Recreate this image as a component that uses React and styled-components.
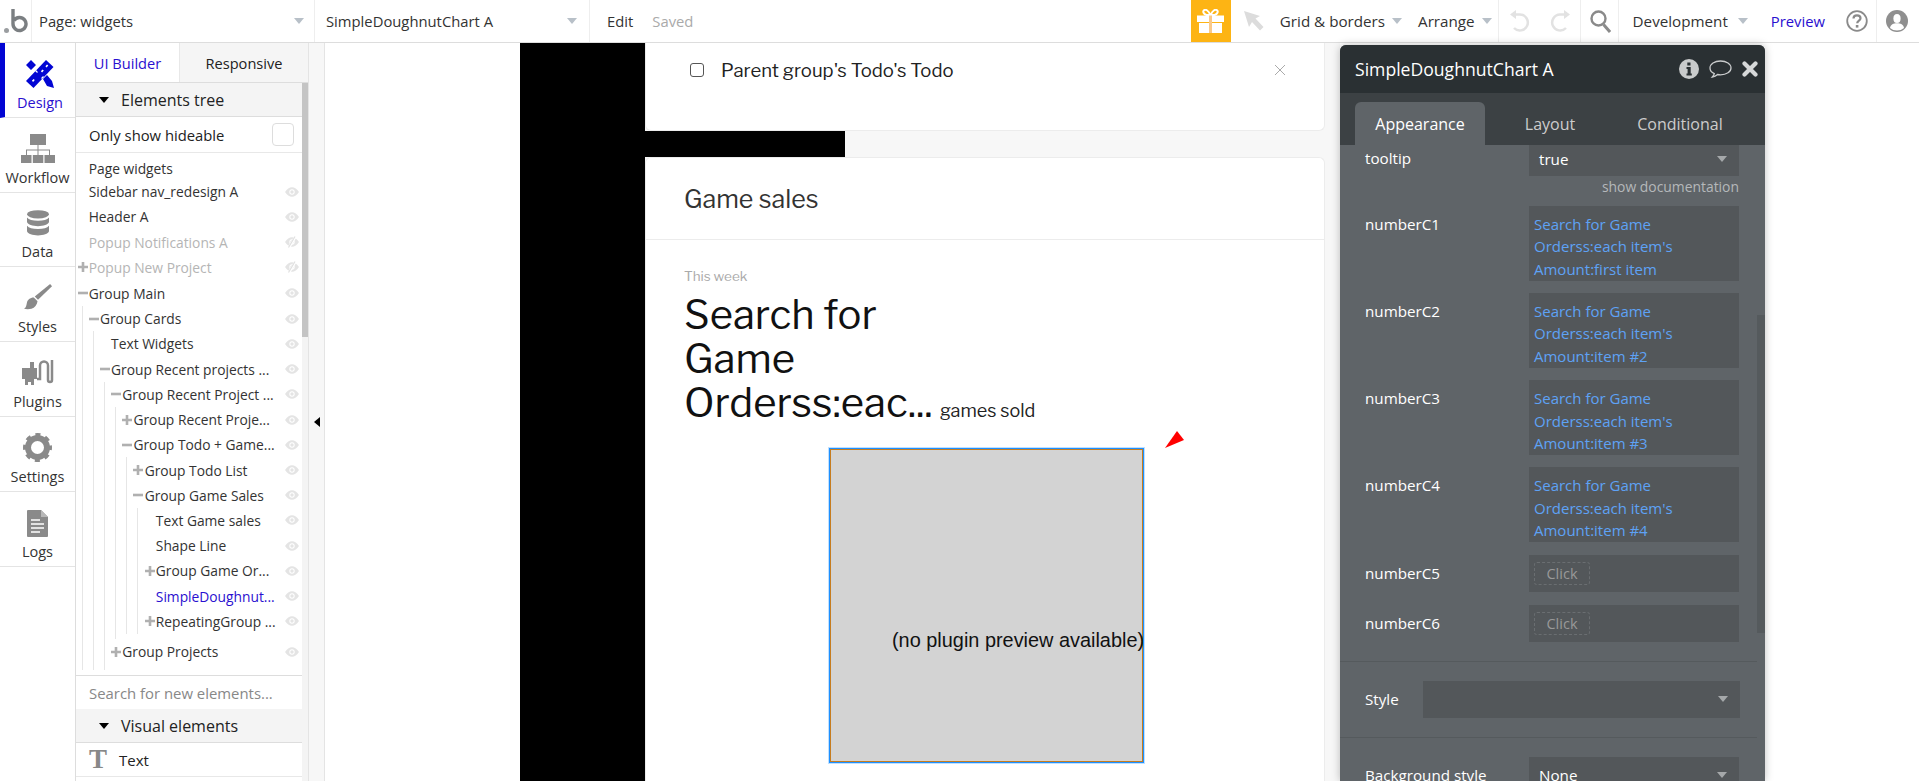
import React from "react";
import styled, { createGlobalStyle } from "styled-components";

const GlobalStyle = createGlobalStyle`
  html, body {
    margin: 0;
    height: 100%;
    overflow: hidden;
    background: #fff;
    font-family: "Open Sans", sans-serif;
    color: #222;
  }
  * { box-sizing: border-box; }
`;

const Shell = styled.div`
  position: relative;
  width: 1919px;
  height: 781px;
  overflow: hidden;
  display: flex;
  flex-direction: column;
`;

const TopBar = styled.header`
  height: 43px;
  flex: none;
  display: flex;
  align-items: center;
  background: #fff;
  border-bottom: 1px solid #ddd;
  font-size: 14.8px;
  svg { flex: none; display: block; }
`;

const Logo = styled.div`
  width: 32px;
  height: 42px;
  flex: none;
  border-right: 1px solid #eee;
  display: flex;
  align-items: center;
  justify-content: center;
`;

const BarSelect = styled.div`
  width: ${(p) => p.$w}px;
  height: 42px;
  flex: none;
  padding: 0 ${(p) => p.$right}px 0 ${(p) => p.$left}px;
  border-right: 1px solid #eee;
  display: flex;
  align-items: center;
  justify-content: space-between;
  color: #333;
`;

const Caret = styled.span`
  display: block;
  flex: none;
  width: 0;
  height: 0;
  border-left: 5.5px solid transparent;
  border-right: 5.5px solid transparent;
  border-top: 6px solid ${(p) => p.$color || "#b8c0c8"};
`;

const BarText = styled.span`
  color: ${(p) => p.$color || "#333"};
  margin-left: ${(p) => p.$left || 0}px;
  white-space: nowrap;
`;

const ToolText = styled(BarText)`
  font-size: 15.2px;
`;

const Spring = styled.div`
  flex: 1;
`;

const GiftButton = styled.div`
  width: 40px;
  height: 42px;
  flex: none;
  background: #fdb414;
  display: flex;
  align-items: center;
  justify-content: center;
`;

const ToolGroup = styled.div`
  height: 42px;
  flex: none;
  display: flex;
  align-items: center;
  gap: ${(p) => p.$gap || 0}px;
  padding-left: ${(p) => p.$pad || 0}px;
  margin-left: ${(p) => p.$left || 0}px;
  width: ${(p) => (p.$w ? `${p.$w}px` : "auto")};
  border-right: ${(p) => (p.$line ? "1px solid #eee" : "none")};
`;

const Body = styled.div`
  flex: 1;
  display: flex;
  min-height: 0;
`;

const SideNav = styled.nav`
  width: 76px;
  flex: none;
  border-right: 1px solid #ddd;
  background: #fff;
`;

const NavItem = styled.div`
  height: 74.8px;
  border-bottom: 1px solid #e4e4e4;
  border-left: ${(p) => (p.$active ? "5px solid #0205d3" : "none")};
  background: #fff;
  display: flex;
  flex-direction: column;
  align-items: center;
  justify-content: flex-end;
  padding-bottom: 4px;
  font-size: 14.5px;
  line-height: 20px;
  color: ${(p) => (p.$active ? "#2a0fd0" : "#333")};
  svg { margin-bottom: 5px; }
`;

const TreePanel = styled.aside`
  width: 232px;
  flex: none;
  display: flex;
  flex-direction: column;
  background: #fff;
  font-size: 13.8px;
`;

const PanelTabs = styled.div`
  height: 40px;
  flex: none;
  display: flex;
  border-bottom: 1px solid #ddd;
  font-size: 14.6px;
`;

const PanelTab = styled.div`
  width: ${(p) => p.$w}px;
  display: flex;
  align-items: center;
  justify-content: center;
  background: ${(p) => (p.$active ? "#fff" : "#f5f5f5")};
  border-right: ${(p) => (p.$active ? "1px solid #e8e8e8" : "none")};
  color: ${(p) => (p.$active ? "#2a0fd0" : "#222")};
`;

const PanelRows = styled.div`
  flex: 1;
  min-height: 0;
  display: flex;
`;

const PanelMain = styled.div`
  width: 226px;
  flex: none;
  display: flex;
  flex-direction: column;
`;

const ScrollTrack = styled.div`
  width: 6px;
  flex: none;
  background: #f4f4f4;
`;

const ScrollThumb = styled.div`
  height: 254px;
  background: #c4c4c4;
`;

const SectionHead = styled.div`
  height: 34px;
  flex: none;
  display: flex;
  align-items: center;
  gap: 12px;
  padding-left: 23px;
  background: #f4f4f4;
  border-bottom: 1px solid #ddd;
  font-size: 16px;
  color: #222;
`;

const BlackCaret = styled.span`
  width: 0;
  height: 0;
  border-left: 5px solid transparent;
  border-right: 5px solid transparent;
  border-top: 6px solid #000;
`;

const HideableRow = styled.div`
  height: 36px;
  flex: none;
  display: flex;
  align-items: center;
  justify-content: space-between;
  padding: 0 8px 0 13px;
  border-bottom: 1px solid #e8e8e8;
  font-size: 14.8px;
`;

const Checkbox = styled.div`
  width: 22px;
  height: 23px;
  background: #fff;
  border: 1px solid #ddd;
  border-radius: 4px;
`;

const Tree = styled.div`
  height: 523px;
  flex: none;
  padding: 4px 0 0 1.5px;
  overflow: hidden;
  border-bottom: 1px solid #ddd;
`;

const TreeRow = styled.div`
  height: ${(p) => p.$h || 25.22}px;
  margin-top: ${(p) => p.$top || 0}px;
  display: flex;
  align-items: center;
  white-space: nowrap;
  position: relative;
  color: ${(p) => (p.$selected ? "#2a0fd0" : p.$faded ? "#b5b5b5" : "#333")};
`;

const Toggle = styled.span`
  width: 11.2px;
  flex: none;
  display: flex;
  svg { display: block; }
`;

const Eye = styled.span`
  position: absolute;
  right: 3px;
  top: 50%;
  margin-top: -6px;
  line-height: 0;
`;

const TreeKids = styled.div`
  margin-left: 4px;
  padding-left: 6.2px;
  padding-bottom: ${(p) => p.$bottom || 0}px;
  border-left: 1px solid #e6e6e6;
`;

const SearchRow = styled.div`
  height: 33px;
  flex: none;
  display: flex;
  align-items: center;
  padding-left: 13px;
  color: #888;
  font-size: 14.9px;
`;

const ElementRow = styled.div`
  height: 34px;
  flex: none;
  display: flex;
  align-items: center;
  gap: 12px;
  padding-left: 13px;
  border-bottom: 1px solid #e8e8e8;
  font-size: 15px;
`;

const SerifT = styled.span`
  font-family: "Liberation Serif", serif;
  font-weight: 700;
  font-size: 27px;
  line-height: 1;
  color: #888;
`;

const CollapseStrip = styled.div`
  width: 17px;
  flex: none;
  background: #f7f7f7;
  border-left: 1px solid #e4e4e4;
  border-right: 1px solid #e4e4e4;
  display: flex;
  align-items: center;
  justify-content: center;
  padding-top: 20px;
`;

const LeftCaret = styled.span`
  width: 0;
  height: 0;
  border-top: 5px solid transparent;
  border-bottom: 5px solid transparent;
  border-right: 6px solid #000;
`;

const Canvas = styled.main`
  flex: 1;
  min-width: 0;
  background: #fff;
  padding-left: 195px;
  overflow: hidden;
`;

const Page = styled.div`
  width: 820px;
  height: 100%;
  display: flex;
  background: #f7f7f7;
`;

const BlackColumn = styled.div`
  width: 125px;
  flex: none;
  background: #000;
`;

const PageContent = styled.div`
  width: 680px;
  flex: none;
  display: flex;
  flex-direction: column;
`;

const Card = styled.section`
  background: #fff;
  border: 1px solid #ececec;
  border-top: ${(p) => (p.$flushTop ? "none" : "1px solid #ececec")};
  border-bottom: ${(p) => (p.$grow ? "none" : "1px solid #ececec")};
  border-radius: ${(p) => (p.$flushTop ? "0 0 6px 6px" : "6px 6px 0 0")};
  font-family: "Libre Franklin", "Inter", sans-serif;
  color: #222;
  flex: ${(p) => (p.$grow ? 1 : "none")};
  height: ${(p) => (p.$h ? `${p.$h}px` : "auto")};
`;

const TodoRow = styled.div`
  display: flex;
  align-items: center;
  height: 54px;
  padding: 0 38px 0 44px;
  font-size: 18.5px;
`;

const TodoBox = styled.span`
  width: 14px;
  height: 14px;
  border: 1.5px solid #555;
  border-radius: 3px;
  margin-right: 17px;
  flex: none;
`;

const Band = styled.div`
  height: 26px;
  flex: none;
  display: flex;
`;

const BandBlack = styled.div`
  width: 200px;
  background: #000;
`;

const CardHeading = styled.div`
  height: 82px;
  display: flex;
  align-items: center;
  padding-left: 38px;
  border-bottom: 1px solid #ececec;
  font-size: 25px;
  color: #333;
`;

const CardBody = styled.div`
  padding: 27px 0 0 38px;
`;

const Muted = styled.div`
  font-size: 13.5px;
  line-height: 18px;
  color: #aaa;
`;

const StatRow = styled.div`
  display: flex;
  align-items: last baseline;
  margin-top: 8px;
`;

const BigNumber = styled.div`
  width: 250px;
  flex: none;
  font-size: 40px;
  line-height: 44px;
  color: #111;
`;

const SmallInline = styled.span`
  font-size: 18px;
  color: #222;
  margin-left: 6px;
  white-space: nowrap;
`;

const ChartBox = styled.div`
  width: 315px;
  height: 315px;
  margin: 23px 0 0 145px;
  background: #d3d3d3;
  border: 1px solid #1e90ff;
  outline: 1px solid #bfe0ff;
  overflow: hidden;
  box-shadow: inset 0 0 0 1px #c77c1e;
  font-family: "Liberation Sans", Arial, sans-serif;
  font-size: 19.9px;
  color: #111;
  white-space: nowrap;
  padding: 179px 0 0 62px;
  line-height: 24px;
`;

const RedTriangle = styled.svg`
  position: absolute;
  left: 1165px;
  top: 431px;
`;

const Inspector = styled.aside`
  position: absolute;
  left: 1340px;
  top: 45px;
  width: 425px;
  height: 736px;
  background: #5f6468;
  border-radius: 6px 6px 0 0;
  box-shadow: 0 0 8px rgba(0, 0, 0, 0.25);
  overflow: hidden;
  color: #fff;
  font-size: 15.2px;
`;

const InspectorTitle = styled.div`
  height: 48px;
  display: flex;
  align-items: center;
  padding: 0 7px 0 15px;
  background: #2a3033;
  font-size: 17.6px;
  gap: 10px;
`;

const InspectorTabs = styled.div`
  height: 52px;
  padding: 9px 0 0 15px;
  display: flex;
  background: #3c4144;
  font-size: 16px;
`;

const InspectorTab = styled.div`
  width: 130px;
  display: flex;
  align-items: center;
  justify-content: center;
  border-radius: 6px 6px 0 0;
  background: ${(p) => (p.$active ? "#5f6468" : "transparent")};
  color: ${(p) => (p.$active ? "#fff" : "#ccc")};
`;

const InspectorBody = styled.div`
  position: relative;
  padding-right: 8px;
`;

const InspectorThumb = styled.div`
  position: absolute;
  right: 0;
  top: 170px;
  width: 8px;
  height: 318px;
  background: #555a5d;
`;

const FieldRow = styled.div`
  display: flex;
  padding-left: 25px;
  margin-bottom: ${(p) => p.$bottom || 0}px;
`;

const FieldLabel = styled.div`
  width: ${(p) => p.$w || 164}px;
  flex: none;
  line-height: ${(p) => p.$line || 36}px;
`;

const WellBox = styled.div`
  width: 210px;
  height: 75px;
  background: #53575a;
  padding: 7px 5px 0;
  font-size: 15px;
  line-height: 22.5px;
  color: #5ea2f5;
  white-space: nowrap;
`;

const SelectBox = styled.div`
  width: ${(p) => p.$w || 210}px;
  height: ${(p) => p.$h}px;
  background: #53575a;
  flex: none;
  display: flex;
  align-items: center;
  justify-content: space-between;
  padding: 0 12px ${(p) => p.$lift || 0}px 10px;
`;

const ClickChip = styled.div`
  width: 56px;
  height: 23px;
  border: 1px dashed #6a6e71;
  border-radius: 3px;
  color: #999;
  font-size: 14.5px;
  display: flex;
  align-items: center;
  justify-content: center;
`;

const ClickWell = styled.div`
  width: 210px;
  height: 37px;
  background: #53575a;
  display: flex;
  align-items: center;
  padding-left: 5px;
`;

const DocLink = styled.div`
  width: 399px;
  text-align: right;
  color: #b5b8ba;
  font-size: 13.9px;
  line-height: 18px;
  padding-top: 2px;
  margin-bottom: 9.5px;
`;

const Divider = styled.div`
  height: 1px;
  background: #555a5d;
  margin: ${(p) => p.$top}px 0 ${(p) => p.$bottom}px;
`;

const Plus = () => (
  <svg width="10" height="10" viewBox="0 0 10 10">
    <path d="M0 3.7h3.7V0h2.6v3.7H10v2.6H6.3V10H3.700V6.300H0z" fill="#b0b0b0" />
  </svg>
);

const Minus = () => (
  <svg width="10" height="10" viewBox="0 0 10 10">
    <path d="M0 3.700h10v2.600H0z" fill="#b0b0b0" />
  </svg>
);

const EyeIcon = ({ off }) => (
  <svg width="14" height="12" viewBox="0 0 14 12">
    <path d="M0 6c2-3.200 4.400-4.800 7-4.800S12 2.800 14 6c-2 3.200-4.400 4.800-7 4.800S2 9.200 0 6z" fill="#e4e4e4" />
    <circle cx="7" cy="6" r="2.700" fill="#fff" />
    <circle cx="7" cy="6" r="1.700" fill="#e4e4e4" />
    {off && <path d="M10.500 0.500L4 11.500" stroke="#fff" strokeWidth="2.500" />}
    {off && <path d="M10 0.500L3.500 11.500" stroke="#e0e0e0" strokeWidth="1.200" />}
  </svg>
);

const DesignIcon = () => (
  <svg width="28" height="28" viewBox="0 0 28 28">
    <g fill="#0205d3">
      <path d="M20 0l7.500 7L7.500 28 0 21z" />
      <path d="M0 5l5-5 5 5-5 5zM17 19l4-4 5 6 2 7-7-2z" />
    </g>
    <path d="M21 4.500l1.300 1.100-1.700 1.800-1.200-1.100zM16.500 9.500l1.300 1.100-1.700 1.800-1.200-1.100zM7.500 19l1.300 1.100-1.700 1.800-1.200-1.100z" fill="#fff" />
    <path d="M9.500 10.500l2 2M15.500 18.500l2-2" stroke="#fff" strokeWidth="1.200" />
  </svg>
);

const WorkflowIcon = () => (
  <svg width="34" height="29" viewBox="0 0 34 29" fill="#8a8a8a">
    <rect x="9" y="0" width="16" height="11" />
    <path d="M16.500 11h1v4.500H29V21h-1v-4.500H17.500V21h-1v-4.500H6V21H5v-5.500h11.500z" />
    <rect x="0" y="21" width="10.500" height="8" />
    <rect x="11.800" y="21" width="10.500" height="8" />
    <rect x="23.500" y="21" width="10.500" height="8" />
  </svg>
);

const DataIcon = () => (
  <svg width="22" height="28" viewBox="0 0 24 28" fill="#8a8a8a">
    <ellipse cx="12" cy="4.500" rx="12" ry="4.500" />
    <path d="M0 8c2 2.500 6 3.500 12 3.500S22 10.500 24 8v5c-1 3-6 4.500-12 4.500S1 16 0 13z" />
    <path d="M0 17c2 2.500 6 3.500 12 3.500s10-1 12-3.500v6c-1 3-6 4.500-12 4.500S1 26 0 23z" />
  </svg>
);

const StylesIcon = () => (
  <svg width="30" height="28" viewBox="0 0 30 30" fill="#8a8a8a">
    <path d="M28 0l2 2.500L15 17l-3.500-3.500z" />
    <path d="M10.500 14.500l4 4c-.5 4-3 7-6.500 8-3 .8-6 .5-8 0 2.500-1.500 2.500-4 3-6 .6-3.500 3.500-6 7.500-6z" />
  </svg>
);

const PluginsIcon = () => (
  <svg width="32" height="28" viewBox="0 0 32 28" fill="none">
    <path d="M2 9h6V3h4v6h3v11h-3v6H9v-3H6v3H3v-6H0V9z" fill="#8a8a8a" />
    <path d="M15 20h3V6.500a4 4 0 0 1 8 0V21a2 2 0 0 0 4 0V1" stroke="#8a8a8a" strokeWidth="2.500" />
  </svg>
);

const SettingsIcon = () => (
  <svg width="29" height="29" viewBox="0 0 29 29">
    <circle cx="14.500" cy="14.500" r="9.500" fill="none" stroke="#8a8a8a" strokeWidth="6" />
    <circle cx="14.500" cy="14.500" r="12.500" fill="none" stroke="#8a8a8a" strokeWidth="4" strokeDasharray="4.900 4.920" strokeDashoffset="2.450" />
  </svg>
);

const LogsIcon = () => (
  <svg width="21" height="27" viewBox="0 0 21 27">
    <path d="M1 0h13l7 7v19a1 1 0 0 1-1 1H1a1 1 0 0 1-1-1V1a1 1 0 0 1 1-1z" fill="#8a8a8a" />
    <path d="M14 0v7h7z" fill="#b8b8b8" />
    <path d="M4 10h9M4 14h13M4 18h13M4 22h9" stroke="#fff" strokeWidth="1.500" />
  </svg>
);

const GiftIcon = () => (
  <svg width="27" height="24" viewBox="0 0 27 24">
    <path d="M13.500 6C11 1 8.500 0 7 1.200 5.500 2.500 6.500 5.200 9.500 6zM13.500 6c2.500-5 5-6 6.500-4.800 1.500 1.300.5 4-2.500 4.800z" fill="none" stroke="#fff" strokeWidth="2" />
    <path d="M0 6.500h27V13H0zM2 14h23v10H2z" fill="#fff" />
    <rect x="12" y="6.500" width="3" height="17.500" fill="#f9c98a" />
  </svg>
);

const CursorIcon = () => (
  <svg width="20" height="20" viewBox="0 0 20 20">
    <path d="M0 0l16 5-4.500 2.500L19.500 16 16 19.500 8 11l-3 5z" fill="#dcdcdc" />
  </svg>
);

const UndoIcon = ({ flip }) => (
  <svg width="20" height="22" viewBox="0 0 20 22" style={flip ? { transform: "scaleX(-1)" } : undefined}>
    <path d="M5 4.500h5a8 8 0 1 1-6 13.500" fill="none" stroke="#e2e2e2" strokeWidth="2.500" />
    <path d="M6 0v9L0 4.500z" fill="#e2e2e2" />
  </svg>
);

const SearchIcon = () => (
  <svg width="21" height="23" viewBox="0 0 21 23" fill="none" stroke="#8a8a8a">
    <circle cx="8.500" cy="8.500" r="7" strokeWidth="2.400" />
    <path d="M13.500 14.500l6.500 7.500" strokeWidth="3" />
  </svg>
);

const HelpIcon = () => (
  <svg width="22" height="22" viewBox="0 0 22 22" fill="none" stroke="#8a8a8a">
    <circle cx="11" cy="11" r="9.800" strokeWidth="1.800" />
    <path d="M7.500 8.500c0-2 1.600-3.200 3.500-3.200s3.500 1.100 3.500 3c0 2.400-3.300 2.400-3.300 5" strokeWidth="2.200" />
    <rect x="9.800" y="15" width="2.600" height="2.600" fill="#8a8a8a" stroke="none" />
  </svg>
);

const UserIcon = () => (
  <svg width="22" height="22" viewBox="0 0 22 22">
    <circle cx="11" cy="11" r="11" fill="#8f8f8f" />
    <ellipse cx="11" cy="8.500" rx="3.600" ry="4.500" fill="#fff" />
    <path d="M4 18c.5-3.500 3.500-4.800 7-4.800s6.500 1.300 7 4.800c-2 1.700-4.300 2.500-7 2.500S6 19.700 4 18z" fill="#fff" />
  </svg>
);

const InfoIcon = () => (
  <svg width="20" height="20" viewBox="0 0 20 20">
    <circle cx="10" cy="10" r="10" fill="#c9cbcc" />
    <path d="M8.300 3.500h3.200v3H8.300zM7.500 8h4.200v6.500h1.100V16.500H7.500v-2h1.100V10H7.500z" fill="#2a3033" />
  </svg>
);

const CommentIcon = () => (
  <svg width="23" height="20" viewBox="0 0 23 20">
    <path d="M11.500 2C5.500 2 1 5 1 9c0 2.500 1.700 4.500 4.300 5.700-.3 1.300-1 2.300-2 3.300 2.300-.2 4-1.200 5.300-2.500 1 .2 1.900.3 2.900.3 6 0 10.500-3 10.500-6.800S17.500 2 11.500 2z" fill="none" stroke="#c9cbcc" strokeWidth="1.300" />
  </svg>
);

const CloseIcon = () => (
  <svg width="16" height="16" viewBox="0 0 16 16">
    <path d="M2.500 2.500l11 11M13.500 2.500l-11 11" stroke="#d6d8d9" strokeWidth="4.200" strokeLinecap="round" />
  </svg>
);

const X = () => (
  <svg width="12" height="12" viewBox="0 0 12 12">
    <path d="M1 1l10 10M11 1L1 11" stroke="#aaa" strokeWidth="1" />
  </svg>
);

const tree = [
  { label: "Page widgets", h: 22, noEye: true },
  { label: "Sidebar nav_redesign A" },
  { label: "Header A" },
  { label: "Popup Notifications A", faded: true, off: true },
  { label: "Popup New Project", faded: true, off: true, mark: "+" },
  {
    label: "Group Main", mark: "-", top: 1,
    kids: [{
      label: "Group Cards", mark: "-",
      kids: [
        { label: "Text Widgets" },
        {
          label: "Group Recent projects ...", mark: "-", pad: 6,
          kids: [
            {
              label: "Group Recent Project ...", mark: "-", pad: 5,
              kids: [
                { label: "Group Recent Proje...", mark: "+" },
                {
                  label: "Group Todo + Game...", mark: "-",
                  kids: [
                    { label: "Group Todo List", mark: "+" },
                    {
                      label: "Group Game Sales", mark: "-",
                      kids: [
                        { label: "Text Game sales" },
                        { label: "Shape Line" },
                        { label: "Group Game Or...", mark: "+" },
                        { label: "SimpleDoughnut...", selected: true },
                        { label: "RepeatingGroup ...", mark: "+" },
                      ],
                    },
                  ],
                },
              ],
            },
            { label: "Group Projects", mark: "+" },
          ],
        },
      ],
    }],
  },
];

const TreeNode = ({ node }) => (
  <>
    <TreeRow $h={node.h} $top={node.top} $faded={node.faded} $selected={node.selected}>
      <Toggle>{node.mark === "+" ? <Plus /> : node.mark === "-" ? <Minus /> : null}</Toggle>
      {node.label}
      {!node.noEye && (
        <Eye>
          <EyeIcon off={node.off} />
        </Eye>
      )}
    </TreeRow>
    {node.kids && (
      <TreeKids $bottom={node.pad}>
        {node.kids.map((k) => (
          <TreeNode key={k.label} node={k} />
        ))}
      </TreeKids>
    )}
  </>
);

const navItems = [
  { label: "Design", icon: <DesignIcon />, active: true },
  { label: "Workflow", icon: <WorkflowIcon /> },
  { label: "Data", icon: <DataIcon /> },
  { label: "Styles", icon: <StylesIcon /> },
  { label: "Plugins", icon: <PluginsIcon /> },
  { label: "Settings", icon: <SettingsIcon /> },
  { label: "Logs", icon: <LogsIcon /> },
];

const wells = [
  ["numberC1", "Amount:first item"],
  ["numberC2", "Amount:item #2"],
  ["numberC3", "Amount:item #3"],
  ["numberC4", "Amount:item #4"],
];

const App = () => (
  <Shell>
    <GlobalStyle />
    <TopBar>
      <Logo>
        <svg width="24" height="26" viewBox="0 0 24 26">
          <circle cx="2.500" cy="22.500" r="2.500" fill="#9a9da0" />
          <path d="M9 1v15a6.500 6.500 0 1 0 1-3.500" fill="none" stroke="#7b7f82" strokeWidth="3.400" />
        </svg>
      </Logo>
      <BarSelect $w={283} $left={7} $right={10}>
        Page: widgets
        <Caret />
      </BarSelect>
      <BarSelect $w={275} $left={11} $right={12}>
        SimpleDoughnutChart A
        <Caret />
      </BarSelect>
      <BarText $left={17}>Edit</BarText>
      <BarText $left={19} $color="#aaa">Saved</BarText>
      <Spring />
      <GiftButton>
        <GiftIcon />
      </GiftButton>
      <BarText $left={13}><CursorIcon /></BarText>
      <ToolText $left={16}>Grid &amp; borders</ToolText>
      <BarText $left={7}><Caret /></BarText>
      <ToolText $left={16}>Arrange</ToolText>
      <BarText $left={7}><Caret /></BarText>
      <ToolGroup $line $w={7} />
      <ToolGroup $line $gap={20} $pad={11} $w={82}>
        <UndoIcon />
        <UndoIcon flip />
      </ToolGroup>
      <ToolGroup $line $pad={9} $w={38}>
        <SearchIcon />
      </ToolGroup>
      <ToolText $left={14}>Development</ToolText>
      <BarText $left={10}><Caret /></BarText>
      <BarText $left={23} $color="#2a0fd0">Preview</BarText>
      <ToolGroup $line $pad={21} $w={52}>
        <HelpIcon />
      </ToolGroup>
      <ToolGroup $pad={9} $w={42}>
        <UserIcon />
      </ToolGroup>
    </TopBar>

    <Body>
      <SideNav>
        {navItems.map((n) => (
          <NavItem key={n.label} $active={n.active}>
            {n.icon}
            {n.label}
          </NavItem>
        ))}
      </SideNav>

      <TreePanel>
        <PanelTabs>
          <PanelTab $active $w={104}>UI Builder</PanelTab>
          <PanelTab $w={128}>Responsive</PanelTab>
        </PanelTabs>
        <PanelRows>
          <PanelMain>
            <SectionHead>
              <BlackCaret />
              Elements tree
            </SectionHead>
            <HideableRow>
              Only show hideable
              <Checkbox />
            </HideableRow>
            <Tree>
              {tree.map((n) => (
                <TreeNode key={n.label} node={n} />
              ))}
            </Tree>
            <SearchRow>Search for new elements...</SearchRow>
            <SectionHead>
              <BlackCaret />
              Visual elements
            </SectionHead>
            <ElementRow>
              <SerifT>T</SerifT>
              Text
            </ElementRow>
          </PanelMain>
          <ScrollTrack>
            <ScrollThumb />
          </ScrollTrack>
        </PanelRows>
      </TreePanel>

      <CollapseStrip>
        <LeftCaret />
      </CollapseStrip>

      <Canvas>
        <Page>
          <BlackColumn />
          <PageContent>
            <Card $flushTop $h={88}>
              <TodoRow>
                <TodoBox />
                Parent group's Todo's Todo
                <Spring />
                <X />
              </TodoRow>
            </Card>
            <Band>
              <BandBlack />
            </Band>
            <Card $grow>
              <CardHeading>Game sales</CardHeading>
              <CardBody>
                <Muted>This week</Muted>
                <StatRow>
                  <BigNumber>Search for Game Orderss:eac...</BigNumber>
                  <SmallInline>games sold</SmallInline>
                </StatRow>
                <ChartBox>(no plugin preview available)</ChartBox>
              </CardBody>
            </Card>
          </PageContent>
        </Page>
      </Canvas>
    </Body>

    <RedTriangle width="20" height="18" viewBox="0 0 20 18">
      <path d="M0 17L12 0l7 9z" fill="#ff0000" />
    </RedTriangle>

    <Inspector>
      <InspectorTitle>
        SimpleDoughnutChart A
        <Spring />
        <InfoIcon />
        <CommentIcon />
        <CloseIcon />
      </InspectorTitle>
      <InspectorTabs>
        <InspectorTab $active>Appearance</InspectorTab>
        <InspectorTab>Layout</InspectorTab>
        <InspectorTab>Conditional</InspectorTab>
      </InspectorTabs>
      <InspectorBody>
        <InspectorThumb />
        <FieldRow>
          <FieldLabel $line={26}>tooltip</FieldLabel>
          <SelectBox $h={31} $lift={4}>
            true
            <Caret $color="#a5a8aa" />
          </SelectBox>
        </FieldRow>
        <DocLink>show documentation</DocLink>
        {wells.map(([name, last]) => (
          <FieldRow key={name} $bottom={12.3}>
            <FieldLabel>{name}</FieldLabel>
            <WellBox>
              Search for Game
              <br />
              Orderss:each item's
              <br />
              {last}
            </WellBox>
          </FieldRow>
        ))}
        {["numberC5", "numberC6"].map((name) => (
          <FieldRow key={name} $bottom={13}>
            <FieldLabel $line={37}>{name}</FieldLabel>
            <ClickWell>
              <ClickChip>Click</ClickChip>
            </ClickWell>
          </FieldRow>
        ))}
        <Divider $top={19} $bottom={19} />
        <FieldRow>
          <FieldLabel $line={37} $w={58}>Style</FieldLabel>
          <SelectBox $w={317} $h={37}>
            <span />
            <Caret $color="#a5a8aa" />
          </SelectBox>
        </FieldRow>
        <Divider $top={19} $bottom={19} />
        <FieldRow>
          <FieldLabel $line={37}>Background style</FieldLabel>
          <SelectBox $h={37}>
            None
            <Caret $color="#a5a8aa" />
          </SelectBox>
        </FieldRow>
      </InspectorBody>
    </Inspector>
  </Shell>
);

export default App;
